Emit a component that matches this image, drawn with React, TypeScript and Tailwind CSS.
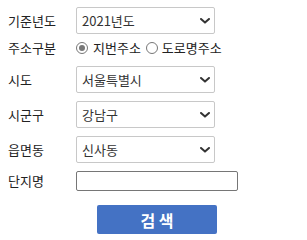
import { useState } from "react";

const FONT = "font-['Noto_Sans_CJK_KR','Noto_Sans',sans-serif]";

function Chevron() {
  return (
    <svg width="10" height="6" viewBox="0 0 10 6" className="shrink-0">
      <path d="M1 1 L5 4.6 L9 1" fill="none" stroke="#333" strokeWidth="2" strokeLinecap="round" strokeLinejoin="round" />
    </svg>
  );
}

function FakeSelect({ value }: { value: string }) {
  return (
    <div className="flex h-[27px] w-[139px] items-center justify-between rounded-[2px] border border-[#c8c8c8] bg-white pl-[5px] pr-[4px] text-[13px] text-[#333]">
      <span>{value}</span>
      <Chevron />
    </div>
  );
}

function Radio({ checked }: { checked: boolean }) {
  return (
    <span className="flex h-[12px] w-[12px] items-center justify-center rounded-full border border-[#777] bg-white">
      {checked && <span className="h-[6px] w-[6px] rounded-full bg-[#777]" />}
    </span>
  );
}

export default function App() {
  const [addrType, setAddrType] = useState<"jibun" | "road">("jibun");

  return (
    <div className={`h-[240px] w-[307px] bg-white pl-[8px] pt-[7px] text-[#222] ${FONT}`}>
      <div className="flex h-[27px] items-center">
        <span className="w-[68px] text-[13px]">기준년도</span>
        <FakeSelect value="2021년도" />
      </div>

      <div className="mt-[4px] flex h-[20px] items-center">
        <span className="w-[68px] text-[13px]">주소구분</span>
        <button className="flex items-center gap-[5px] text-[13px]" onClick={() => setAddrType("jibun")}>
          <Radio checked={addrType === "jibun"} />
          지번주소
        </button>
        <button className="ml-[5px] flex items-center gap-[4px] text-[13px]" onClick={() => setAddrType("road")}>
          <Radio checked={addrType === "road"} />
          도로명주소
        </button>
      </div>

      <div className="mt-[8px] flex h-[27px] items-center">
        <span className="w-[68px] text-[13px]">시도</span>
        <FakeSelect value="서울특별시" />
      </div>

      <div className="mt-[8px] flex h-[27px] items-center">
        <span className="w-[68px] text-[13px]">시군구</span>
        <FakeSelect value="강남구" />
      </div>

      <div className="mt-[8px] flex h-[27px] items-center">
        <span className="w-[68px] text-[13px]">읍면동</span>
        <FakeSelect value="신사동" />
      </div>

      <div className="mt-[8px] flex h-[20px] items-center">
        <span className="w-[68px] text-[13px]">단지명</span>
        <input className="h-[20px] w-[162px] rounded-[2px] border border-[#767676] bg-white px-[3px] text-[13px] outline-none" />
      </div>

      <button className="ml-[89px] mt-[14px] flex h-[29px] w-[120px] items-center justify-center rounded-[2px] bg-[#4472c4] text-[16px] font-bold text-white">
        검 색
      </button>
    </div>
  );
}
